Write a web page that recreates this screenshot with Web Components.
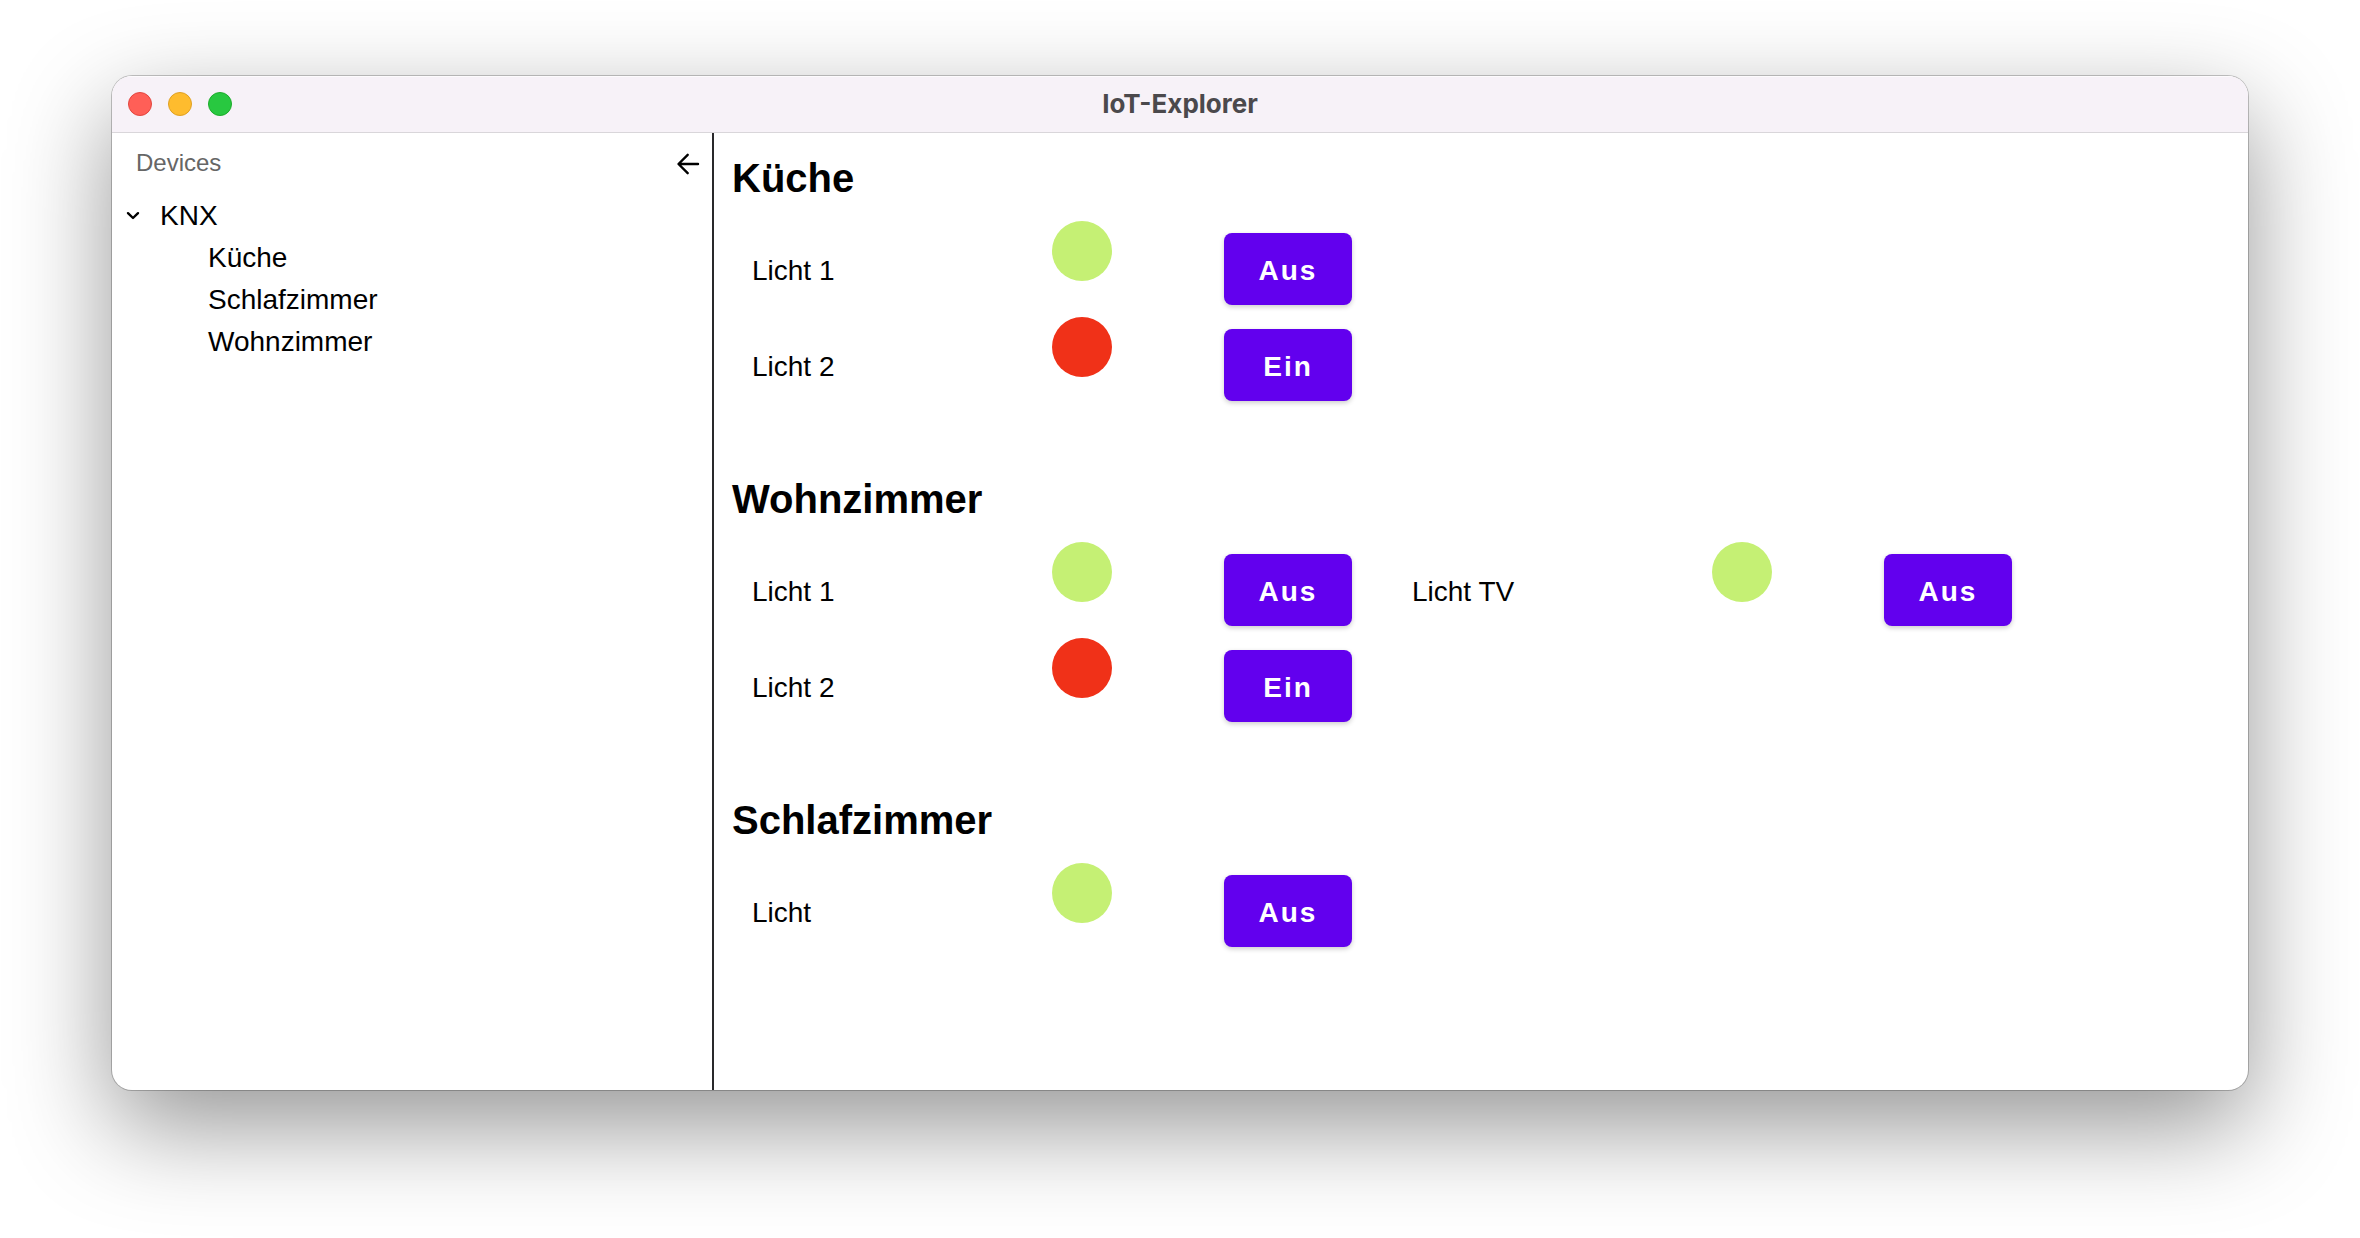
<!DOCTYPE html>
<html lang="de">
<head>
<meta charset="utf-8">
<title>IoT-Explorer</title>
<style>
html, body { margin: 0; height: 100%; background: #fff; }
body { font-family: "Liberation Sans", Arial, Helvetica, sans-serif; color: #000; }
</style>
</head>
<body>
<iot-window heading="IoT-Explorer">
  <device-tree slot="sidebar"></device-tree>
  <room-section name="Küche">
    <light-column>
      <light-control name="Licht 1" on></light-control>
      <light-control name="Licht 2"></light-control>
    </light-column>
  </room-section>
  <room-section name="Wohnzimmer">
    <light-column>
      <light-control name="Licht 1" on></light-control>
      <light-control name="Licht 2"></light-control>
    </light-column>
    <light-column>
      <light-control name="Licht TV" on></light-control>
    </light-column>
  </room-section>
  <room-section name="Schlafzimmer">
    <light-column>
      <light-control name="Licht" on></light-control>
    </light-column>
  </room-section>
</iot-window>
<script>
const define = (tag, html, setup) => {
  const template = document.createElement('template');
  template.innerHTML = html;
  customElements.define(tag, class extends HTMLElement {
    constructor() {
      super();
      this.attachShadow({ mode: 'open' }).append(template.content.cloneNode(true));
    }
    connectedCallback() { if (setup) setup(this, this.shadowRoot); }
  });
};

define('iot-window', `
<style>
:host { display: flex; box-sizing: border-box; min-height: 100vh; padding: 76px 112px 148px; }
.window { flex: 1; min-width: 0; display: flex; flex-direction: column; border-radius: 20px; overflow: hidden; background: #fff;
  box-shadow: 0 0 0 1px rgba(0,0,0,.22), 0 36px 100px rgba(0,0,0,.42); }
header { display: grid; grid-template-columns: 1fr auto 1fr; align-items: center; height: 56px; padding: 0 16px; background: #f7f2f8; border-bottom: 1px solid #d9d6da; box-shadow: inset 0 1px #fdfbfd; }
.lights { display: flex; gap: 16px; }
.lights button { width: 24px; height: 24px; padding: 0; border: 1px solid var(--edge); border-radius: 50%; background: var(--fill); }
.close { --fill: #ff5f57; --edge: #e2463f; }
.min { --fill: #febc2e; --edge: #dfa023; }
.max { --fill: #28c840; --edge: #1dac2b; }
h1 { margin: 0; padding-bottom: 1px; font: 700 26px/32px Inter, sans-serif; color: #4b494c; }
.body { flex: 1; display: flex; }
aside { flex: 0 0 600px; border-right: 2px solid #29292b; }
main { flex: 1; min-width: 0; padding: 21px 18px; }
</style>
<div class="window">
  <header>
    <div class="lights"><button class="close" aria-label="Schließen"></button><button class="min" aria-label="Minimieren"></button><button class="max" aria-label="Maximieren"></button></div>
    <h1></h1>
  </header>
  <div class="body"><aside><slot name="sidebar"></slot></aside><main><slot></slot></main></div>
</div>`, (el, root) => { root.querySelector('h1').textContent = el.getAttribute('heading'); });

define('device-tree', `
<style>
:host { display: block; }
.top { display: flex; justify-content: space-between; align-items: center; padding: 15px 8px 15px 24px; color: #666; font-size: 24px; line-height: 30px; }
.top span { padding-bottom: 2px; }
button { display: flex; padding: 0; border: 0; background: none; color: #000; }
ul { list-style: none; margin: 0; padding: 0; font-size: 28px; line-height: 42px; }
.node { display: flex; align-items: center; gap: 16px; padding-left: 8px; }
ul ul { padding-left: 96px; }
svg { display: block; fill: none; stroke: currentColor; stroke-width: 2.4; stroke-linecap: round; stroke-linejoin: round; }
</style>
<div class="top"><span>Devices</span><button aria-label="Einklappen"><svg width="32" height="32" viewBox="0 0 32 32"><path d="M26 16H7M15.7 6.8L6.5 16L15.7 25.2"/></svg></button></div>
<ul>
  <li><div class="node"><button aria-label="KNX"><svg width="24" height="24" viewBox="0 0 24 24"><path d="M8 9.2L13 14L18 9.2"/></svg></button><span>KNX</span></div>
    <ul><li>Küche</li><li>Schlafzimmer</li><li>Wohnzimmer</li></ul>
  </li>
</ul>`);

define('room-section', `
<style>
:host { display: block; margin-bottom: 62px; }
h2 { margin: 0 0 19px; font-size: 40px; line-height: 48px; font-weight: 700; }
.columns { display: flex; align-items: flex-start; gap: 20px; }
</style>
<h2></h2><div class="columns"><slot></slot></div>`, (el, root) => { root.querySelector('h2').textContent = el.getAttribute('name'); });

define('light-column', `
<style>
:host { display: flex; flex-direction: column; }
</style>
<slot></slot>`);

define('light-control', `
<style>
:host { display: grid; grid-template-columns: 300px 172px 128px; align-items: center; height: 96px; padding: 0 20px; font-size: 28px; line-height: 36px; }
.name { padding-top: 3px; }
.lamp { align-self: start; width: 60px; height: 60px; border-radius: 50%; background: #f03118; }
:host([on]) .lamp { background: #c5f074; }
button { height: 72px; padding: 3px 0 0; border: 0; border-radius: 8px; background: #6200ee; color: #fff; font: 700 28px/36px "Liberation Sans", Arial, sans-serif; letter-spacing: 2px; box-shadow: 0 2px 5px rgba(0,0,0,.2); }
</style>
<span class="name" id="name"></span><span class="lamp"></span><button aria-describedby="name"></button>`, (el, root) => {
  const button = root.querySelector('button');
  const render = () => { button.textContent = el.hasAttribute('on') ? 'Aus' : 'Ein'; };
  root.querySelector('.name').textContent = el.getAttribute('name');
  button.onclick = () => { el.toggleAttribute('on'); render(); };
  render();
});
</script>
</body>
</html>
